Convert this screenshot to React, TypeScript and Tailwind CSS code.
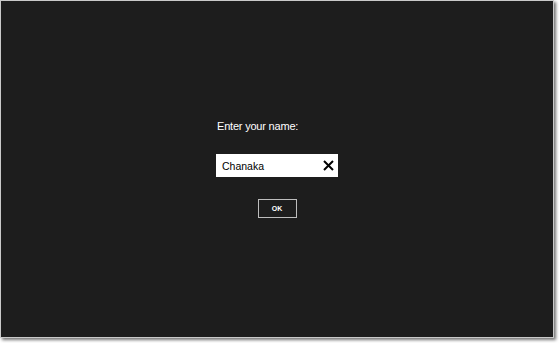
import React from "react";

export default function App() {
  return (
    <div className="w-[559px] h-[343px] bg-white">
      <div className="w-[554px] h-[338px] border border-[#c9c9c9] bg-[#1d1d1d] shadow-[2px_2px_3px_rgba(0,0,0,0.55)] flex items-center justify-center">
        <div className="w-[122px] flex flex-col pb-[1px]" style={{ fontFamily: '"Liberation Sans", Arial, sans-serif' }}>
          <div className="text-[11px] leading-[14px] tracking-[-0.2px] text-white ml-[1px]">Enter your name:</div>
          <div className="mt-[21px] h-[23px] bg-white flex items-center justify-between pl-[6px] pr-[4px]">
            <span className="text-[10.5px] leading-[14px] text-black">Chanaka</span>
            <svg width="11" height="11" viewBox="0 0 11 11">
              <path d="M1 1 L10 10 M10 1 L1 10" stroke="#000" strokeWidth="2" fill="none" />
            </svg>
          </div>
          <div className="mt-[22px] self-center w-[39px] h-[19px] border border-[#bdbdbd] flex items-center justify-center">
            <span className="text-[7px] leading-none text-white font-bold">OK</span>
          </div>
        </div>
      </div>
    </div>
  );
}
